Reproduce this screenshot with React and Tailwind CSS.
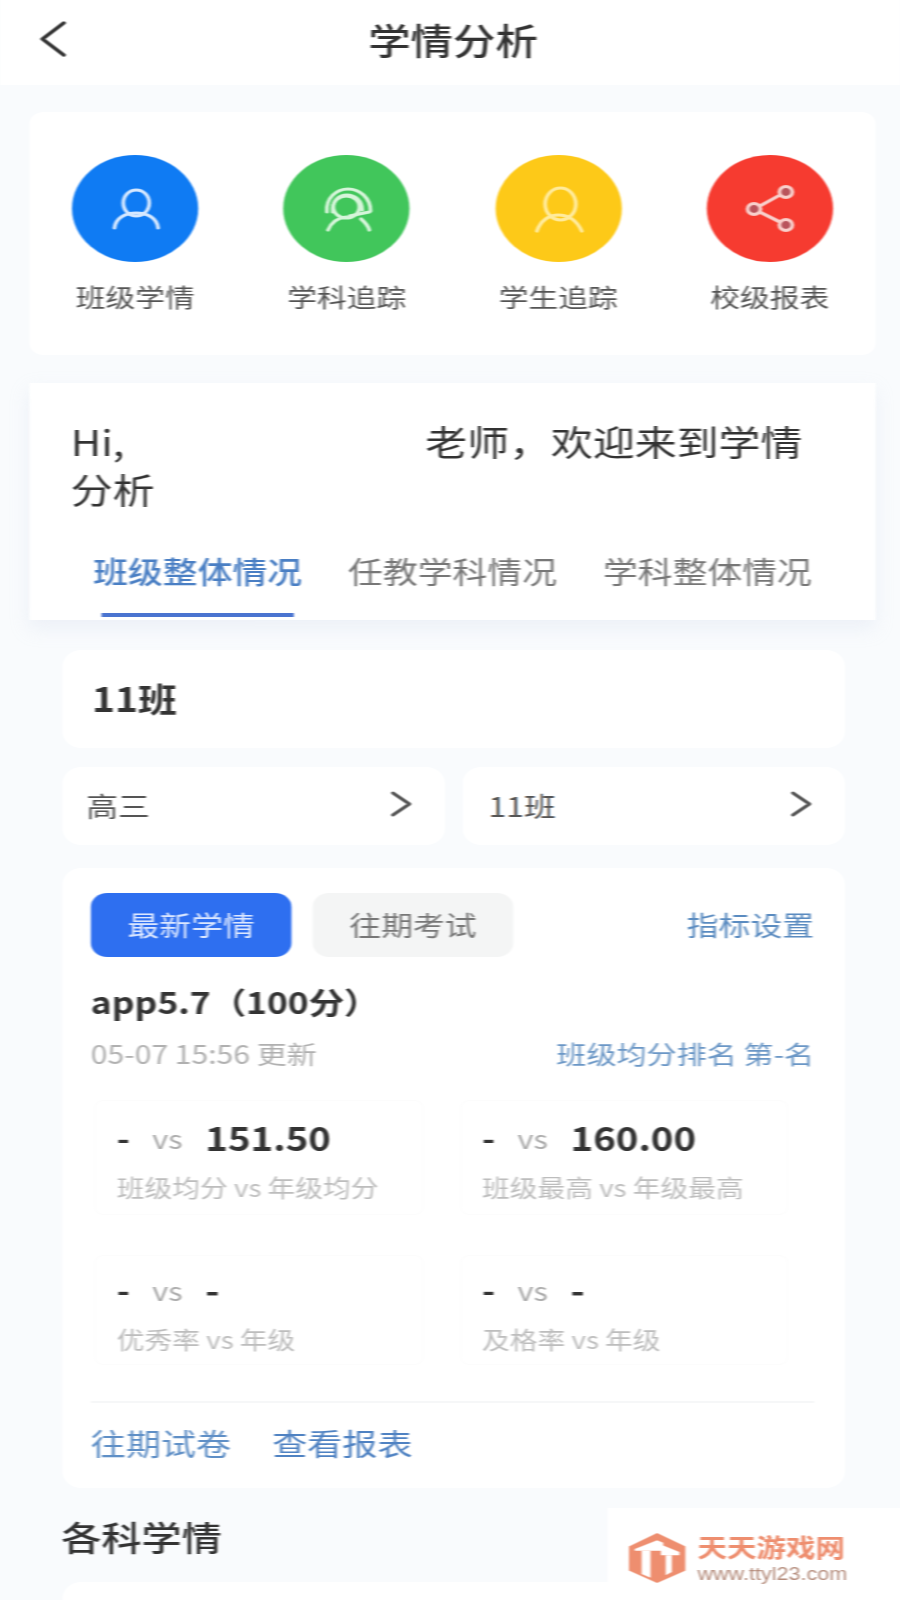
const font = { fontFamily: '"Noto Sans CJK SC", "Noto Sans", sans-serif' };
const logoFont = { fontFamily: '"Liberation Sans", "Noto Sans CJK SC", sans-serif' };

const shortcuts = [
  { label: '班级学情', color: 'bg-[#0f7bf3]', icon: <ClassIcon /> },
  { label: '学科追踪', color: 'bg-[#41c65b]', icon: <SubjectIcon /> },
  { label: '学生追踪', color: 'bg-[#fdc918]', icon: <StudentIcon /> },
  { label: '校级报表', color: 'bg-[#f63b30]', icon: <ShareIcon /> },
];

const stats = [
  { a: '-', b: '151.50', label: '班级均分 vs 年级均分' },
  { a: '-', b: '160.00', label: '班级最高 vs 年级最高' },
  { a: '-', b: '-', label: '优秀率 vs 年级' },
  { a: '-', b: '-', label: '及格率 vs 年级' },
];

function ClassIcon() {
  return (
    <svg viewBox="0 0 107 107" className="w-full h-full" fill="none" stroke="#d5e8ff" strokeWidth="3.2" strokeLinecap="round">
      <ellipse cx="54.5" cy="48" rx="11" ry="13" />
      <path d="M36 73C37 63 45 58 54.5 58C64 58 72 63 73 73" />
    </svg>
  );
}

function SubjectIcon() {
  return (
    <svg viewBox="0 0 107 107" className="w-full h-full" fill="none" stroke="#d6f5da" strokeWidth="3.2" strokeLinecap="round">
      <path d="M37 57C36 43 45 34 55 34C65 34 74 43 74 56" />
      <path d="M42 57C41 46 47 40 54 40C61 40 67 46 67 55" />
      <ellipse cx="53.5" cy="52" rx="11" ry="11" />
      <path d="M56 61L73 57" />
      <path d="M38 75C41 67 46 63 53 62M66 64C69 67 72 71 73 75" />
    </svg>
  );
}

function StudentIcon() {
  return (
    <svg viewBox="0 0 107 107" className="w-full h-full" fill="none" stroke="#ffeb9c" strokeWidth="3.2" strokeLinecap="round">
      <ellipse cx="55" cy="49" rx="13" ry="16" />
      <path d="M35 76C38 66 45 60 53 60C62 60 69 66 73 76" />
    </svg>
  );
}

function ShareIcon() {
  return (
    <svg viewBox="0 0 107 107" className="w-full h-full" fill="none" stroke="#f8cfcb" strokeWidth="3.2">
      <path d="M45 51L62 40M45 57L62 67" />
      <circle cx="40" cy="54" r="5.5" fill="#b9545c" />
      <circle cx="67" cy="37" r="5.5" fill="#b9545c" />
      <circle cx="67" cy="70" r="5.5" fill="#b9545c" />
    </svg>
  );
}

function Chevron({ className, width = 3 }) {
  return (
    <svg viewBox="0 0 18 26" className={className} fill="none" stroke="#555555" strokeWidth={width} strokeLinecap="round" strokeLinejoin="round">
      <path d="M2 2L16 13L2 24" />
    </svg>
  );
}

export default function App() {
  return (
    // the screenshot is stretched sideways, so the 763px page is scaled to fill 900px
    <div className="w-[900px] h-[1600px] overflow-hidden bg-[#f9fbfd]" style={font}>
      <div className="relative w-[763px] h-[1600px] origin-top-left scale-x-[1.18] blur-[0.7px]">
        {/* HEADER */}
        <header className="h-[85px] pb-[7px] grid grid-cols-[1fr_auto_1fr] items-center pl-[34px] pr-[29px] bg-white">
          <svg viewBox="0 0 22 36" className="w-[22px] h-[36px]" fill="none" stroke="#333333" strokeWidth="3.4" strokeLinecap="round" strokeLinejoin="round">
            <path d="M20 2L2 18L20 34" />
          </svg>
          <h1 className="text-[36px] leading-[50px] font-medium text-[#333333]">学情分析</h1>
          <div />
        </header>

        {/* SHORTCUTS */}
        <section className="mt-[27px] ml-[25px] w-[717px] h-[243px] pt-[43px] grid grid-cols-4 content-start bg-white rounded-xl">
          {shortcuts.map((item) => (
            <div key={item.label} className="flex flex-col items-center">
              <div className={`w-[107px] h-[107px] rounded-full ${item.color}`}>{item.icon}</div>
              <span className="mt-[16px] text-[25.2px] leading-[36px] text-[#555555]">{item.label}</span>
            </div>
          ))}
        </section>

        {/* WELCOME + TABS */}
        <section className="mt-[28px] ml-[25px] w-[717px] h-[237px] pt-[34px] bg-white shadow-[0_8px_16px_rgba(200,210,230,0.25)]">
          <p className="pl-[35px] text-[35.5px] leading-[48px] text-[#333333]">
            Hi,<span className="inline-block w-[255px]" />老师，欢迎来到学情<br />分析
          </p>
          <div className="mt-[35px] pl-[54px] flex gap-[39px] text-[29.5px] leading-[44px] text-[#777777]">
            <div className="relative h-[70px] text-[#4a7fc4] font-medium">
              班级整体情况
              <div className="absolute left-[7px] bottom-[1px] w-[163px] h-[4px] bg-[#4a74d0]" />
            </div>
            <div>任教学科情况</div>
            <div>学科整体情况</div>
          </div>
        </section>

        <div className="ml-[53px] w-[663px]">
          {/* CLASS NAME */}
          <div className="mt-[30px] h-[98px] pl-[25px] flex items-center bg-white rounded-2xl text-[33px] font-semibold text-[#333333]">11班</div>

          {/* SELECTORS */}
          <div className="mt-[19px] grid grid-cols-2 gap-[15px]">
            {['高三', '11班'].map((label, i) => (
              <div key={i} className={`h-[78px] pr-[28px] flex items-center justify-between bg-white rounded-2xl text-[27px] text-[#555555] ${i === 0 ? 'pl-[20px]' : 'pl-[22px]'}`}>
                {label}
                <Chevron className="w-[18px] h-[26px] -mt-[4px]" />
              </div>
            ))}
          </div>

          {/* LATEST REPORT */}
          <section className="mt-[23px] h-[620px] pt-[25px] pl-[24px] pr-[26px] bg-white rounded-2xl">
            <div className="flex items-center">
              <button className="w-[170px] h-[64px] rounded-[14px] bg-[#2e6ff0] text-[27px] text-[#dbe7ff]">最新学情</button>
              <button className="ml-[18px] w-[170px] h-[64px] rounded-[14px] bg-[#f4f5f5] text-[27px] text-[#777777]">往期考试</button>
              <span className="ml-auto text-[27px] text-[#5a8bc0]">指标设置</span>
            </div>

            <h2 className="mt-[22px] text-[30px] leading-[44px] font-semibold text-[#333333]">app5.7（100分）</h2>

            <div className="mt-[12px] flex items-center justify-between text-[25.5px] leading-[36px]">
              <span className="text-[#b0b0b0]">05-07 15:56 更新</span>
              <span className="text-[#6b97c6]">班级均分排名 第-名</span>
            </div>

            <div className="mt-[29px] ml-[3px] w-[588px] grid grid-cols-2 gap-x-[31px] gap-y-[40px]">
              {stats.map((s, i) => (
                <div key={i} className={`pl-[18px] rounded-lg border border-[#fcfcfc] ${i < 2 ? 'h-[115px] pt-[9px]' : 'h-[110px] pt-[6px]'}`}>
                  <div className="flex items-center h-[54px]">
                    <span className="w-[30px] text-[30px] font-bold text-[#333333]">{s.a}</span>
                    <span className="w-[45px] text-[26px] text-[#aaaaaa]">vs</span>
                    <span className="text-[32.5px] font-semibold text-[#333333]">{s.b}</span>
                  </div>
                  <div className="mt-[5px] text-[23.5px] leading-[36px] text-[#bdbdbd]">{s.label}</div>
                </div>
              ))}
            </div>

            <div className="mt-[36px] h-[2px] bg-[#f6f7f8]" />

            <div className="mt-[18px] flex gap-[35px] text-[29.7px] leading-[44px] text-[#5f8fc6]">
              <span>往期试卷</span>
              <span className="text-[#4f82c2]">查看报表</span>
            </div>
          </section>
        </div>

        {/* SUBJECTS */}
        <h2 className="mt-[24px] ml-[52px] text-[34px] leading-[50px] font-medium text-[#333333]">各科学情</h2>
        <div className="mt-[20px] ml-[53px] w-[663px] h-[100px] bg-white rounded-2xl" />

        {/* WATERMARK */}
        <div className="absolute left-[515px] top-[1508px] w-[250px] h-[92px] bg-white">
          <svg viewBox="25 15 165 160" preserveAspectRatio="none" className="absolute left-[18px] top-[25px] w-[48px] h-[50px]" fill="#ee8e6f">
            <path d="M107 15L190 58V135L107 175L25 135V58Z" />
            <path d="M42 66L107 38L125 46V72H42Z" fill="#ffffff" />
            <path d="M62 72H88V158L62 146Z" fill="#ffffff" />
            <path d="M118 52L172 76V86H118Z" fill="#ffffff" />
            <path d="M132 86H150V140L132 150Z" fill="#ffffff" />
          </svg>
          <div className="absolute left-[76px] top-[26px] w-[130px] text-[25px] leading-[28px] font-bold text-[#ee8e6f] whitespace-nowrap" style={logoFont}>天天游戏网</div>
          <div className="absolute left-[76px] top-[55px] text-[18.3px] leading-[21px] text-[#b58d7d] whitespace-nowrap" style={{ fontFamily: '"Liberation Sans", sans-serif' }}>www.ttyl23.com</div>
        </div>
      </div>
    </div>
  );
}
